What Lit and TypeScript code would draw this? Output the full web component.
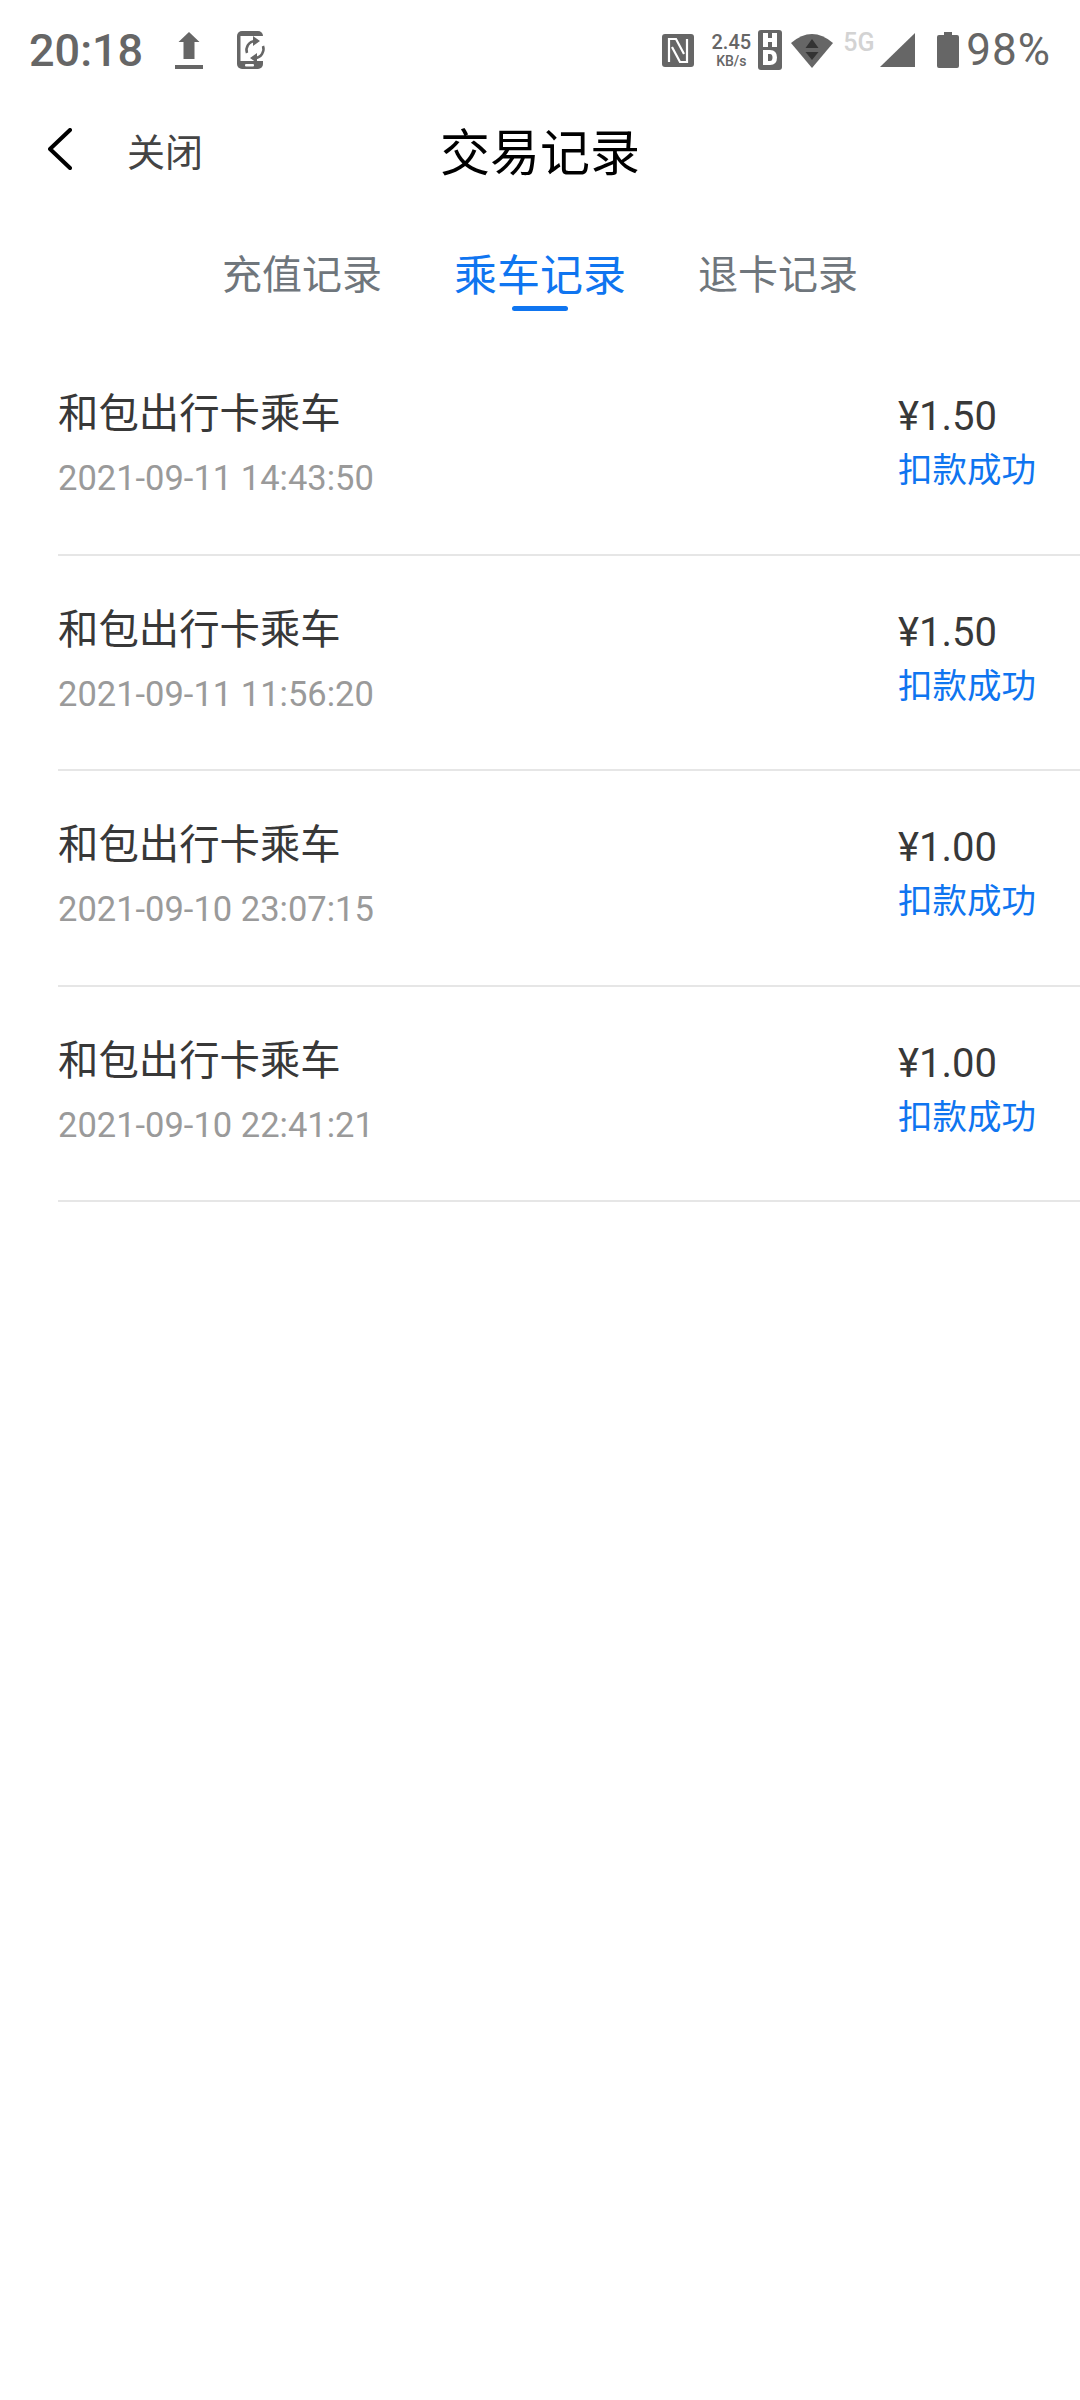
import { LitElement, html, css } from "lit";
import { customElement } from "lit/decorators.js";

const records = [
  { time: "2021-09-11 14:43:50", amount: "¥1.50" },
  { time: "2021-09-11 11:56:20", amount: "¥1.50" },
  { time: "2021-09-10 23:07:15", amount: "¥1.00" },
  { time: "2021-09-10 22:41:21", amount: "¥1.00" },
];

@customElement("app-root")
export class AppRoot extends LitElement {
  static styles = css`
    :host {
      display: block;
      min-height: 2400px;
      background: #fff;
      font-family: Roboto, "Noto Sans CJK SC", sans-serif;
    }

    .status {
      height: 100px;
      display: flex;
      align-items: center;
      padding: 0 29px 0 29px;
      color: #666;
      box-sizing: border-box;
    }
    .status svg {
      display: block;
      flex: none;
    }
    .clock {
      font-size: 45px;
      font-weight: 500;
      width: 146px;
    }
    .upload {
      margin-right: 34px;
    }
    .spacer {
      flex: 1;
    }
    .speed {
      width: 42px;
      margin: 0 6px 0 16px;
      text-align: center;
      font-weight: 500;
      line-height: 1;
    }
    .speed div:first-child {
      font-size: 20px;
    }
    .speed div:last-child {
      font-size: 14px;
      margin-top: 2px;
    }
    .net {
      font-size: 25px;
      font-weight: 500;
      color: #d3d3d3;
      width: 37px;
      margin: -16px 0 0 10px;
    }
    .pct {
      font-size: 44px;
      letter-spacing: 1px;
      margin-left: 7px;
    }

    .nav {
      height: 98px;
      display: grid;
      grid-template-columns: 1fr auto 1fr;
      align-items: center;
    }
    .close {
      display: flex;
      align-items: center;
      padding-left: 48px;
      gap: 55px;
      font-size: 38px;
      color: #444;
    }
    .title {
      font-size: 50px;
      color: #000;
    }

    .tabs {
      display: flex;
      justify-content: center;
      align-items: center;
      gap: 72px;
      margin-top: 42px;
      height: 72px;
    }
    .tab {
      position: relative;
      font-size: 40px;
      line-height: 72px;
      color: #6f767c;
    }
    .tab.active {
      font-size: 43px;
      color: #0f75f0;
    }
    .tab.active::after {
      content: "";
      position: absolute;
      left: 50%;
      margin-left: -28px;
      bottom: 1px;
      width: 56px;
      height: 5px;
      border-radius: 3px;
      background: #0f75f0;
    }

    .list {
      padding-left: 58px;
      margin-top: 28px;
    }
    .row {
      height: 215.5px;
      box-sizing: border-box;
      display: flex;
      justify-content: space-between;
      border-bottom: 2px solid #e6e6e6;
      padding-top: 47px;
    }
    .name {
      font-size: 40.4px;
      line-height: 56px;
      color: #383838;
    }
    .time {
      font-size: 34.5px;
      line-height: 40px;
      color: #9a9a9a;
      margin-top: 15px;
    }
    .side {
      width: 182px;
      padding-top: 2px;
    }
    .amount {
      font-size: 40px;
      line-height: 56px;
      color: #383838;
    }
    .state {
      font-size: 34.5px;
      line-height: 50px;
      color: #0f75f0;
    }
  `;

  render() {
    return html`
      <div class="status">
        <span class="clock">20:18</span>
        <svg class="upload" width="28" height="37" viewBox="0 0 28 37" fill="#666">
          <path d="M14 0 24.500 10H19.500V27H8.500V10H3.500Z" />
          <rect y="33" width="28" height="4" />
        </svg>
        <svg width="30" height="38" viewBox="0 0 30 38">
          <rect width="26" height="38" rx="5" fill="#666" />
          <rect x="3.500" y="5" width="27" height="25" fill="#fff" />
          <rect x="8" y="33" width="9" height="2.500" rx="1" fill="#fff" />
          <g fill="none" stroke="#666" stroke-width="2.5">
            <path d="M10 22A9 9 0 0 1 18 10" />
            <path d="M26 15A9 9 0 0 1 18 27" />
          </g>
          <path fill="#666" d="M16 5 23 10 16 15ZM20 22 13 27 20 32Z" />
        </svg>
        <span class="spacer"></span>
        <svg width="32" height="33" viewBox="0 0 32 33">
          <rect width="32" height="33" rx="3" fill="#666" />
          <path
            fill="none"
            stroke="#fff"
            stroke-width="2.2"
            d="M7 28V5H14L22 20M25 5V28H18L10 13"
          />
        </svg>
        <div class="speed"><div>2.45</div><div>KB/s</div></div>
        <svg width="24" height="40" viewBox="0 0 24 40">
          <rect width="24" height="40" rx="3" fill="#666" />
          <path fill="#fff" d="M5 3H10V8H14V3H19V17H14V12H10V17H5Z" />
          <path
            fill="#fff"
            fill-rule="evenodd"
            d="M5 20H12Q19 20 19 27.500T12 35H5ZM10 24V31H12Q14.500 31 14.500 27.500T12 24Z"
          />
        </svg>
        <svg style="margin-left:9px" width="42" height="36" viewBox="0 0 42 36">
          <path fill="#666" d="M0 11Q21 -7 42 11L21 36Z" />
          <path fill="#333" d="M21 7 27.500 16H14.500ZM14.500 20H27.500L21 28Z" />
        </svg>
        <span class="net">5G</span>
        <svg width="35" height="34" viewBox="0 0 35 34">
          <path fill="#666" d="M35 0V34H0Z" />
        </svg>
        <svg style="margin-left:22px" width="22" height="36" viewBox="0 0 22 36">
          <path
            fill="#666"
            d="M7 0H15V3H20Q22 3 22 5V34Q22 36 20 36H2Q0 36 0 34V5Q0 3 2 3H7Z"
          />
        </svg>
        <span class="pct">98%</span>
      </div>

      <div class="nav">
        <div class="close">
          <svg width="24" height="42" viewBox="0 0 24 42">
            <path
              d="M22 2 2 21 22 40"
              fill="none"
              stroke="#000"
              stroke-width="4"
              stroke-linecap="round"
              stroke-linejoin="round"
            />
          </svg>
          <span>关闭</span>
        </div>
        <div class="title">交易记录</div>
        <div></div>
      </div>

      <div class="tabs">
        <div class="tab">充值记录</div>
        <div class="tab active">乘车记录</div>
        <div class="tab">退卡记录</div>
      </div>

      <div class="list">
        ${records.map(
          (r) => html`
            <div class="row">
              <div>
                <div class="name">和包出行卡乘车</div>
                <div class="time">${r.time}</div>
              </div>
              <div class="side">
                <div class="amount">${r.amount}</div>
                <div class="state">扣款成功</div>
              </div>
            </div>
          `
        )}
      </div>
    `;
  }
}
